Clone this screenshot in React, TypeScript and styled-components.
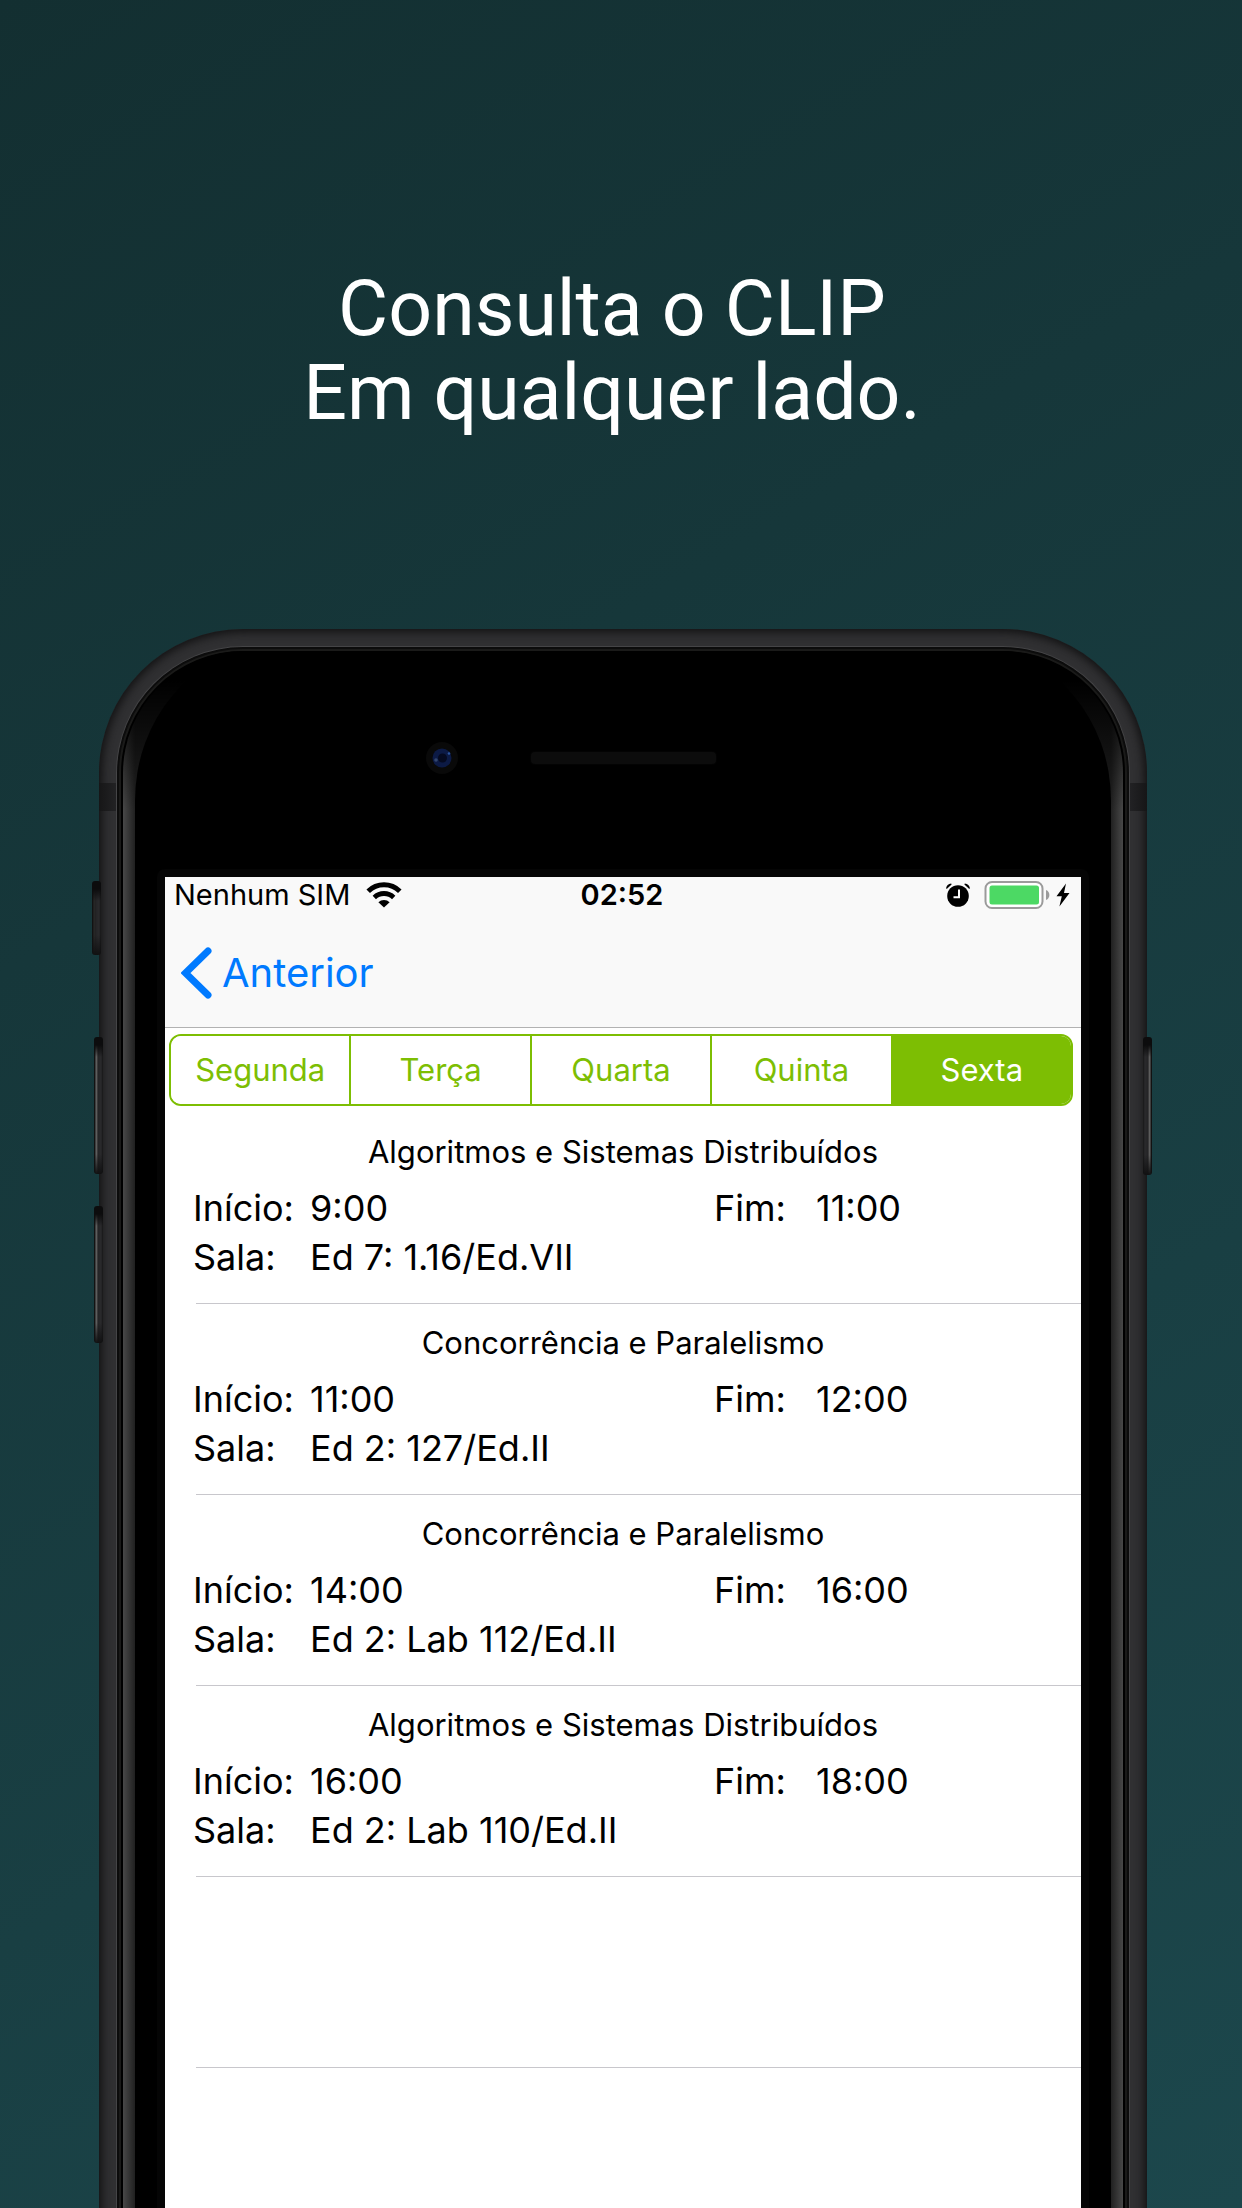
import React, { useState } from "react";
import styled, { createGlobalStyle } from "styled-components";

const GlobalStyle = createGlobalStyle`
  *, *::before, *::after { box-sizing: border-box; }
  body { margin: 0; }
`;

const GREEN = "#7dbe03";
const BLUE = "#007aff";

const Page = styled.main`
  display: flex;
  flex-direction: column;
  min-height: 100vh;
  overflow: hidden;
  background: linear-gradient(150deg, #132f31 0%, #1c474c 100%);
  font-family: Inter, "Liberation Sans", sans-serif;
  color: #000;
`;

const Headline = styled.h1`
  margin: 0;
  padding: 267px 18px 194px 0;
  color: #fff;
  font: 400 77px/84px Roboto, sans-serif;
  text-align: center;
`;

const Frame = styled.div`
  position: relative;
  flex: 1;
  display: flex;
  margin: 0 95px -24px 99px;
  padding: 17px 17px 0;
  border-radius: 144px 144px 0 0;
  background: #303032;
  box-shadow: inset 0 0 10px 3px #111112;
`;

const Ring = styled.div`
  flex: 1;
  display: flex;
  padding: 4px 6px 0;
  border: solid #454547;
  border-width: 1px 1px 0;
  border-radius: 127px 127px 0 0;
  background: #000;
  box-shadow: inset 0 0 0 2px #0c0c0c, inset 0 0 0 4px #1a1a19;
`;

const Glass = styled.div`
  flex: 1;
  display: flex;
  padding: 0 12px;
  border-radius: 122px 122px 0 0;
  background:
    linear-gradient(#000 30px, transparent 160px),
    linear-gradient(90deg, #484848, #202020 12px, #202020 calc(100% - 12px), #484848);
`;

const Face = styled.div`
  flex: 1;
  display: flex;
  flex-direction: column;
  padding: 0 22px;
  border-radius: 130px 130px 0 0 / 150px 150px 0 0;
  background: #000;
`;

const Sensors = styled.div`
  display: grid;
  grid-template-columns: 1fr 185px 1fr;
  gap: 73px;
  align-items: center;
  padding: 91px 0 95px;
`;

const Camera = styled.svg`
  justify-self: end;
  width: 32px;
  height: 32px;
`;

const Speaker = styled.div`
  height: 12px;
  border-radius: 4px;
  background: #0c0c0c;
  box-shadow: 0 0 2px #0c0c0c;
`;

const Bezel = styled.div`
  flex: 1;
  display: flex;
  padding: 8px 8px 0;
  border-radius: 8px 8px 0 0;
  background: #050505;
`;

const Screen = styled.section`
  flex: 1;
  min-width: 0;
  background: #fff;
`;

const Band = styled.span<{ $side: "left" | "right" }>`
  position: absolute;
  top: 154px;
  ${(p) => p.$side}: 0;
  width: 17px;
  height: 28px;
  background: linear-gradient(to ${(p) => p.$side}, #222224, #161617);
`;

const SideKey = styled.span<{ $side: "left" | "right"; $top: number; $height: number; $dim?: boolean }>`
  position: absolute;
  top: ${(p) => p.$top}px;
  ${(p) => p.$side}: ${(p) => (p.$dim ? -7 : -5)}px;
  width: 9px;
  height: ${(p) => p.$height}px;
  border-radius: 3px;
  background:
    linear-gradient(#0c0c0d 8px, transparent 20px, transparent calc(100% - 20px), #111112),
    linear-gradient(to ${(p) => (p.$side === "left" ? "right" : "left")},
      #121212 1px, ${(p) => (p.$dim ? "#2c2c2c" : "#6a6a6a")} 2px, ${(p) => (p.$dim ? "#202020" : "#505050")} 3px, #242426 4px, #2a2a2c 7px, #161617 9px);
`;

const Header = styled.header`
  border-bottom: 1px solid #b2b2b2;
  background: #f9f9f9;
`;

const StatusBar = styled.div`
  display: grid;
  grid-template-columns: 1fr auto 1fr;
  align-items: center;
  padding: 0 11px 0 9px;
  font-size: 29px;
  line-height: 36px;
`;

const StatusGroup = styled.div<{ $end?: boolean }>`
  display: flex;
  align-items: center;
  justify-content: ${(p) => (p.$end ? "flex-end" : "flex-start")};
  gap: ${(p) => (p.$end ? 14 : 16)}px;

  svg { display: block; }
`;

const Power = styled.div`
  display: flex;
  align-items: center;
  gap: 6px;
`;

const Clock = styled.time`
  font-weight: 600;
`;

const NavBar = styled.nav`
  display: flex;
  align-items: center;
  height: 114px;
  padding: 6px 16px 0;
`;

const BackButton = styled.button`
  display: flex;
  align-items: center;
  gap: 10px;
  padding: 0;
  border: 0;
  background: none;
  color: ${BLUE};
  font: inherit;
  font-size: 40px;
  line-height: 48px;
  cursor: pointer;

  svg { display: block; }
`;

const Days = styled.div`
  display: flex;
  margin: 6px 8px 7px 4px;
  border: 2px solid ${GREEN};
  border-radius: 12px;
  overflow: hidden;
`;

const Day = styled.button<{ $active: boolean }>`
  flex: 1 1 0;
  height: 68px;
  padding: 0 0 2px;
  border: 0;
  background: ${(p) => (p.$active ? GREEN : "#fff")};
  color: ${(p) => (p.$active ? "#fff" : GREEN)};
  font: inherit;
  font-size: 31px;
  cursor: pointer;

  &:not(:last-child) { border-right: 2px solid ${GREEN}; }
`;

const Lessons = styled.ul`
  margin: 0;
  padding: 0;
  list-style: none;
`;

const Lesson = styled.li`
  display: flex;
  flex-direction: column;
  min-height: 191px;
  padding-top: 19px;

  &::after {
    content: "";
    height: 1px;
    margin: auto 0 0 31px;
    background: #c8c7cc;
  }
`;

const Title = styled.h2`
  margin: 0 0 12px;
  font-size: 31px;
  font-weight: 400;
  line-height: 40px;
  text-align: center;
`;

const Details = styled.dl`
  display: grid;
  grid-template-columns: 117px 1fr 102px 265px;
  margin: 0;
  padding-left: 28px;
  font-size: 36px;
  line-height: 49px;
`;

const Label = styled.dt``;

const Value = styled.dd<{ $wide?: boolean }>`
  margin: 0;
  grid-column: ${(p) => (p.$wide ? "2 / -1" : "auto")};
`;

const days = ["Segunda", "Terça", "Quarta", "Quinta", "Sexta"];

const lessons = [
  { title: "Algoritmos e Sistemas Distribuídos", start: "9:00", end: "11:00", room: "Ed 7: 1.16/Ed.VII" },
  { title: "Concorrência e Paralelismo", start: "11:00", end: "12:00", room: "Ed 2: 127/Ed.II" },
  { title: "Concorrência e Paralelismo", start: "14:00", end: "16:00", room: "Ed 2: Lab 112/Ed.II" },
  { title: "Algoritmos e Sistemas Distribuídos", start: "16:00", end: "18:00", room: "Ed 2: Lab 110/Ed.II" },
];

const WifiIcon = () => (
  <svg width="36" height="26" viewBox="0 0 36 26" aria-hidden="true">
    <path d="M2.2 9.200A22.500 22.500 0 0 1 33.800 9.200" fill="none" stroke="#000" strokeWidth="5" />
    <path d="M8.300 15.400A14 14 0 0 1 27.700 15.400" fill="none" stroke="#000" strokeWidth="4.800" />
    <path d="M12.400 20.200A8 8 0 0 1 23.600 20.200L18 25.600Z" fill="#000" />
  </svg>
);

const AlarmIcon = () => (
  <svg width="24" height="24" viewBox="0 0 24 24" aria-hidden="true">
    <circle cx="12" cy="13" r="10.800" />
    <path d="M0 5.500A6 6 0 0 1 5.200 0.600L5.600 1.600L1 5.800ZM24 5.500A6 6 0 0 0 18.800 0.600L18.400 1.600L23 5.800Z" />
    <path d="M13 6.500V14.200H7.500" fill="none" stroke="#fff" strokeWidth="2" />
  </svg>
);

const BatteryIcon = () => (
  <svg width="66" height="28" viewBox="0 0 66 28" aria-hidden="true">
    <rect x="1.500" y="1" width="57" height="26" rx="6.500" fill="#fff" stroke="#9b9b9b" strokeWidth="2" />
    <rect x="5.500" y="4.500" width="49.500" height="19" rx="2.500" fill="#4cd964" />
    <path d="M62 9C66.500 10.500 66.500 17.500 62 19Z" fill="#9b9b9b" />
  </svg>
);

const BoltIcon = () => (
  <svg width="14" height="24" viewBox="0 0 14 24" aria-hidden="true">
    <path d="M10 0.500L0.500 13.200H5.800L3.400 23.500L13.500 10H8Z" />
  </svg>
);

const ChevronIcon = () => (
  <svg width="31" height="52" viewBox="0 0 31 52" aria-hidden="true">
    <path d="M27 4L4.500 26L27 48" fill="none" stroke={BLUE} strokeWidth="7" strokeLinecap="round" strokeLinejoin="miter" />
  </svg>
);

export default function App() {
  const [day, setDay] = useState("Sexta");

  return (
    <>
      <GlobalStyle />
      <Page>
        <Headline>
          Consulta o CLIP
          <br />
          Em qualquer lado.
        </Headline>
        <Frame>
          <Band $side="left" />
          <Band $side="right" />
          <SideKey $side="left" $top={252} $height={74} $dim />
          <SideKey $side="left" $top={408} $height={137} />
          <SideKey $side="left" $top={577} $height={137} />
          <SideKey $side="right" $top={408} $height={138} />
          <Ring>
            <Glass>
              <Face>
                <Sensors>
                  <Camera viewBox="0 0 32 32" aria-hidden="true">
                    <circle cx="16" cy="16" r="16" fill="#090909" />
                    <circle cx="16" cy="16" r="9.500" fill="#0c1a45" />
                    <circle cx="16.500" cy="16" r="4.500" fill="#050a20" />
                    <circle cx="10" cy="18" r="1.800" fill="#32466f" />
                    <circle cx="23" cy="11.500" r="1.300" fill="#2b55a0" />
                  </Camera>
                  <Speaker />
                </Sensors>
                <Bezel>
                  <Screen>
                    <Header>
                      <StatusBar>
                        <StatusGroup>
                          <span>Nenhum SIM</span>
                          <WifiIcon />
                        </StatusGroup>
                        <Clock>02:52</Clock>
                        <StatusGroup $end>
                          <AlarmIcon />
                          <Power>
                            <BatteryIcon />
                            <BoltIcon />
                          </Power>
                        </StatusGroup>
                      </StatusBar>
                      <NavBar>
                        <BackButton type="button">
                          <ChevronIcon />
                          Anterior
                        </BackButton>
                      </NavBar>
                    </Header>
                    <Days>
                      {days.map((name) => (
                        <Day
                          key={name}
                          type="button"
                          $active={name === day}
                          aria-pressed={name === day}
                          onClick={() => setDay(name)}
                        >
                          {name}
                        </Day>
                      ))}
                    </Days>
                    <Lessons>
                      {lessons.map((lesson) => (
                        <Lesson key={lesson.start}>
                          <Title>{lesson.title}</Title>
                          <Details>
                            <Label>Início:</Label>
                            <Value>{lesson.start}</Value>
                            <Label>Fim:</Label>
                            <Value>{lesson.end}</Value>
                            <Label>Sala:</Label>
                            <Value $wide>{lesson.room}</Value>
                          </Details>
                        </Lesson>
                      ))}
                      <Lesson aria-hidden="true" />
                    </Lessons>
                  </Screen>
                </Bezel>
              </Face>
            </Glass>
          </Ring>
        </Frame>
      </Page>
    </>
  );
}
